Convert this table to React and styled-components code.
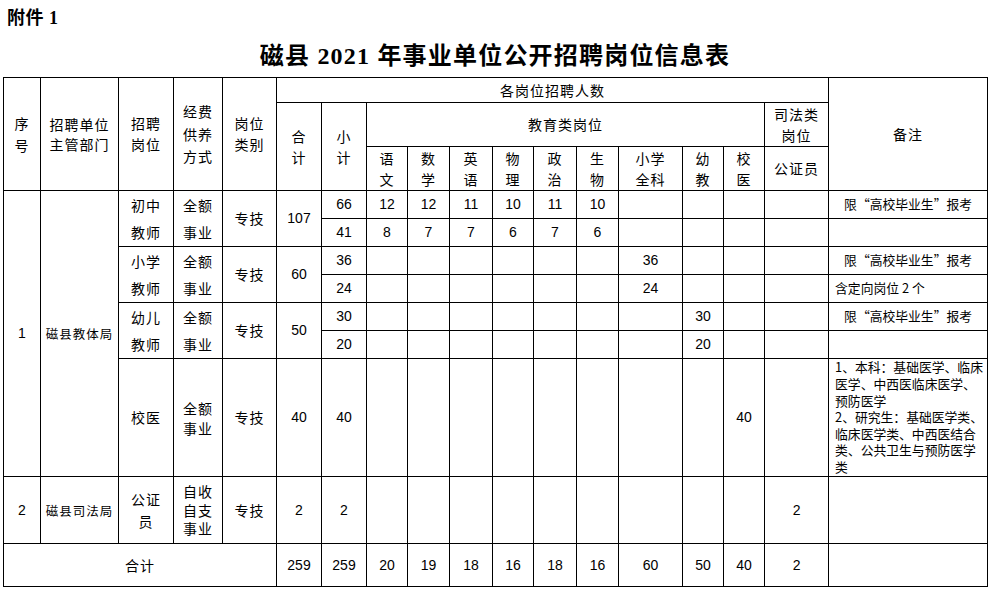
import React from 'react';
import styled, { createGlobalStyle } from 'styled-components';

const GlobalStyle = createGlobalStyle`
  html, body {
    margin: 0;
    padding: 0;
    background: #fff;
    color: #000;
  }
`;

const Page = styled.div`
  width: 994px;
  padding: 0 7px 0 3px;
  box-sizing: border-box;
  font-family: "Liberation Sans", "Noto Sans CJK SC", sans-serif;
`;

const Attachment = styled.div`
  padding: 8px 0 0 4px;
  height: 20px;
  font-family: "Liberation Serif", "Noto Sans CJK SC", serif;
  font-weight: 700;
  font-size: 18px;
  line-height: 20px;
  letter-spacing: 0.5px;
`;

const Title = styled.h1`
  margin: 0;
  width: 984px;
  height: 49px;
  display: flex;
  align-items: center;
  justify-content: center;
  padding-top: 1px;
  box-sizing: border-box;
  font-family: "Liberation Serif", "Noto Sans CJK SC", serif;
  font-weight: 700;
  font-size: 24px;
  letter-spacing: 1.2px;
`;

const Table = styled.table`
  width: 984px;
  table-layout: fixed;
  border-collapse: collapse;
`;

const Row = styled.tr`
  height: ${p => p.$h}px;
`;

const Cell = styled.td`
  border: 1px solid #000;
  padding: 0;
  text-align: center;
  vertical-align: middle;
  white-space: pre-line;
  font-size: ${p => p.$size || 14}px;
  line-height: ${p => p.$lh || 21}px;
  letter-spacing: ${p => (p.$cjk ? '1px' : '0')};
  font-family: ${p => (p.$cjk ? '"Noto Sans CJK SC", sans-serif' : 'inherit')};
`;

const Note = styled.td`
  border: 1px solid #000;
  padding: 0 0 0 ${p => (p.$center ? 0 : 6)}px;
  text-align: ${p => (p.$center ? 'center' : 'left')};
  vertical-align: middle;
  white-space: pre;
  overflow: hidden;
  font-family: "Noto Sans CJK SC", sans-serif;
  font-size: 12.8px;
  line-height: 16.6px;
`;

const COLS = [37, 78, 55, 49, 54, 45, 45, 41, 42, 43, 41, 43, 42, 64, 41, 41, 64, 159];
const EDU = ['语\n文', '数\n学', '英\n语', '物\n理', '政\n治', '生\n物', '小学\n全科', '幼\n教', '校\n医'];

// 9 edu columns + 公证员
const Counts = ({ values }) =>
  values.map((v, i) => <Cell key={i}>{v}</Cell>);

const blank = n => Array(n).fill('');

const LIMIT = '限“高校毕业生”报考';

const DOCTOR_NOTE = [
  '1、本科：基础医学、临床',
  '医学、中西医临床医学、',
  '预防医学',
  '2、研究生：基础医学类、',
  '临床医学类、中西医结合',
  '类、公共卫生与预防医学',
  '类',
].join('\n');

export default function App() {
  return (
    <Page>
      <GlobalStyle />
      <Attachment>附件 1</Attachment>
      <Title>磁县 2021 年事业单位公开招聘岗位信息表</Title>
      <Table>
        <colgroup>
          {COLS.map((w, i) => <col key={i} style={{ width: w }} />)}
        </colgroup>
        <tbody>
          <Row $h={25}>
            <Cell $cjk rowSpan={3} $lh={22}>{'序\n号'}</Cell>
            <Cell $cjk rowSpan={3} $lh={20}>{'招聘单位\n主管部门'}</Cell>
            <Cell $cjk rowSpan={3} $lh={21}>{'招聘\n岗位'}</Cell>
            <Cell $cjk rowSpan={3} $lh={22.5}>{'经费\n供养\n方式'}</Cell>
            <Cell $cjk rowSpan={3} $lh={21}>{'岗位\n类别'}</Cell>
            <Cell $cjk colSpan={12}>各岗位招聘人数</Cell>
            <Cell $cjk rowSpan={3}>备注</Cell>
          </Row>
          <Row $h={44}>
            <Cell $cjk rowSpan={2}>{'合\n计'}</Cell>
            <Cell $cjk rowSpan={2}>{'小\n计'}</Cell>
            <Cell $cjk colSpan={9}>教育类岗位</Cell>
            <Cell $cjk>{'司法类\n岗位'}</Cell>
          </Row>
          <Row $h={44}>
            {EDU.map(t => <Cell $cjk key={t}>{t}</Cell>)}
            <Cell $cjk>公证员</Cell>
          </Row>

          <Row $h={28}>
            <Cell rowSpan={7}>1</Cell>
            <Cell $cjk rowSpan={7} $size={12.5}>磁县教体局</Cell>
            <Cell $cjk rowSpan={2} $lh={27}>{'初中\n教师'}</Cell>
            <Cell $cjk rowSpan={2} $lh={27}>{'全额\n事业'}</Cell>
            <Cell $cjk rowSpan={2}>专技</Cell>
            <Cell rowSpan={2}>107</Cell>
            <Cell>66</Cell>
            <Counts values={[12, 12, 11, 10, 11, 10, '', '', '', '']} />
            <Note $center>{LIMIT}</Note>
          </Row>
          <Row $h={28}>
            <Cell>41</Cell>
            <Counts values={[8, 7, 7, 6, 7, 6, '', '', '', '']} />
            <Note />
          </Row>
          <Row $h={28}>
            <Cell $cjk rowSpan={2} $lh={27}>{'小学\n教师'}</Cell>
            <Cell $cjk rowSpan={2} $lh={27}>{'全额\n事业'}</Cell>
            <Cell $cjk rowSpan={2}>专技</Cell>
            <Cell rowSpan={2}>60</Cell>
            <Cell>36</Cell>
            <Counts values={[...blank(6), 36, '', '', '']} />
            <Note $center>{LIMIT}</Note>
          </Row>
          <Row $h={28}>
            <Cell>24</Cell>
            <Counts values={[...blank(6), 24, '', '', '']} />
            <Note>含定向岗位 2 个</Note>
          </Row>
          <Row $h={28}>
            <Cell $cjk rowSpan={2} $lh={27}>{'幼儿\n教师'}</Cell>
            <Cell $cjk rowSpan={2} $lh={27}>{'全额\n事业'}</Cell>
            <Cell $cjk rowSpan={2}>专技</Cell>
            <Cell rowSpan={2}>50</Cell>
            <Cell>30</Cell>
            <Counts values={[...blank(7), 30, '', '']} />
            <Note $center>{LIMIT}</Note>
          </Row>
          <Row $h={28}>
            <Cell>20</Cell>
            <Counts values={[...blank(7), 20, '', '']} />
            <Note />
          </Row>
          <Row $h={118}>
            <Cell $cjk>校医</Cell>
            <Cell $cjk $lh={20}>{'全额\n事业'}</Cell>
            <Cell $cjk>专技</Cell>
            <Cell>40</Cell>
            <Cell>40</Cell>
            <Counts values={[...blank(8), 40, '']} />
            <Note>{DOCTOR_NOTE}</Note>
          </Row>

          <Row $h={67}>
            <Cell>2</Cell>
            <Cell $cjk $size={12.5}>磁县司法局</Cell>
            <Cell $cjk $lh={22}>{'公证\n员'}</Cell>
            <Cell $cjk $lh={18.5}>{'自收\n自支\n事业'}</Cell>
            <Cell $cjk>专技</Cell>
            <Cell>2</Cell>
            <Cell>2</Cell>
            <Counts values={[...blank(9), 2]} />
            <Note />
          </Row>

          <Row $h={43}>
            <Cell $cjk colSpan={5}>合计</Cell>
            <Cell>259</Cell>
            <Cell>259</Cell>
            <Counts values={[20, 19, 18, 16, 18, 16, 60, 50, 40, 2]} />
            <Note />
          </Row>
        </tbody>
      </Table>
    </Page>
  );
}
